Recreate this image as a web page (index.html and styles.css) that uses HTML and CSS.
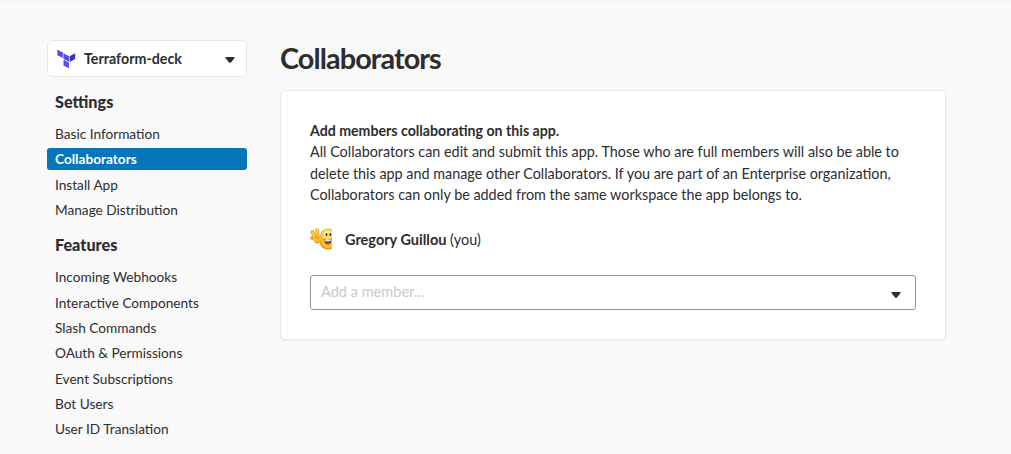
FILE: index.html
```html
<!DOCTYPE html>
<html lang="en">
<head>
<meta charset="utf-8">
<title>Collaborators</title>
<link rel="stylesheet" href="styles.css">
</head>
<body>
<div class="page">
  <aside class="sidebar">
    <div class="app-picker">
      <svg class="app-logo" width="20" height="20" viewBox="0 0 20 20">
        <path fill="#5550e6" d="M.3.6l5.600 2.800v5.700L.3 6.200zM6.500 4.300l5.600 2.900v5.600L6.500 10zM6.500 10.800l5.600 2.900v5.600l-5.600-2.800z"/>
        <path fill="#3834bb" d="M12.700 7.200l5.400-2.900v5.700l-5.400 2.900z"/>
      </svg>
      <span class="app-name">Terraform-deck</span>
      <svg class="caret" width="10" height="6" viewBox="0 0 10 6"><path fill="#2c2d30" d="M1 0h8q1 .3.5 1.100L6 5.400q-1 .8-2 0L.5 1.100Q0 .3 1 0z"/></svg>
    </div>
    <h2 class="nav-title">Settings</h2>
    <nav class="nav">
      <a class="nav-item">Basic Information</a>
      <a class="nav-item active">Collaborators</a>
      <a class="nav-item">Install App</a>
      <a class="nav-item">Manage Distribution</a>
    </nav>
    <h2 class="nav-title features">Features</h2>
    <nav class="nav">
      <a class="nav-item">Incoming Webhooks</a>
      <a class="nav-item">Interactive Components</a>
      <a class="nav-item">Slash Commands</a>
      <a class="nav-item">OAuth &amp; Permissions</a>
      <a class="nav-item">Event Subscriptions</a>
      <a class="nav-item">Bot Users</a>
      <a class="nav-item">User ID Translation</a>
    </nav>
  </aside>
  <main class="main">
    <h1 class="title">Collaborators</h1>
    <section class="card">
      <p class="intro"><strong>Add members collaborating on this app.</strong><br>
      All Collaborators can edit and submit this app. Those who are full members will also be able to<br>
      delete this app and manage other Collaborators. If you are part of an Enterprise organization,<br>
      Collaborators can only be added from the same workspace the app belongs to.</p>
      <div class="member">
        <svg class="avatar" width="22" height="22" viewBox="0 0 22 22">
          <path fill="#fbc22e" d="M11 4Q15-1 22 1v19q-5 3-9 0Q9 17.500 10 11z"/>
          <path fill="#ffdc50" d="M13 4q4-3 8-2v10q-6 1-9-3z"/>
          <path fill="none" stroke="#e9930f" stroke-width="1.300" d="M10.500 12q0 6 4 8 4 1.800 7.500 0"/>
          <path fill="none" stroke="#ee9f22" stroke-width="3.600" stroke-linecap="round" d="M5 9L2.200 4M7.500 8L7 2M4 10.500L2 10"/>
          <path fill="none" stroke="#ffcf49" stroke-width="2" stroke-linecap="round" d="M5 9L2.200 4M7.500 8L7 2"/>
          <ellipse cx="7.500" cy="10.500" rx="4.800" ry="4.600" fill="#f9b931"/>
          <path fill="none" stroke="#e59118" d="M5 9.500q3-1 4 1.500M5 14.500q3 1.500 6-1"/>
          <ellipse cx="16" cy="6" rx="1.800" ry="2.700" fill="#fff"/><ellipse cx="20.300" cy="6" rx="1.700" ry="2.700" fill="#fff"/>
          <ellipse cx="16.500" cy="6.500" rx="1" ry="1.500" fill="#33261c"/><ellipse cx="20.300" cy="6.500" rx="1" ry="1.500" fill="#33261c"/>
          <path fill="#70251b" d="M13.500 11q4 2.500 8-.5 0 6-3.500 6-3.500-.5-4.500-5.500z"/>
          <path fill="#fff" d="M14 11.400q3.800 2 7.200-.3v1.400q-3.500 2-6.600.4z"/><path fill="#e65043" d="M16.500 15q2-1.500 3.500 0-1.500 1.800-3.500 0z"/>
        </svg>
        <span><strong>Gregory Guillou</strong> (you)</span>
      </div>
      <div class="select">
        <span class="placeholder">Add a member…</span>
        <svg class="caret" width="10" height="6" viewBox="0 0 10 6"><path fill="#2c2d30" d="M1 0h8q1 .3.5 1.100L6 5.400q-1 .8-2 0L.5 1.100Q0 .3 1 0z"/></svg>
      </div>
    </section>
  </main>
</div>
</body>
</html>
```

FILE: styles.css
```css
* { box-sizing: border-box; }
body {
  margin: 0;
  height: 454px;
  overflow: hidden;
  background: #f9f9f9;
  box-shadow: inset 0 1px 0 #f3f3f3;
  color: #2c2d30;
  font-family: Lato, "Liberation Sans", sans-serif;
  font-size: 14.4px;
}
h1, h2, p { margin: 0; }
.page {
  display: grid;
  grid-template-columns: 200px 666px;
  column-gap: 33px;
  padding: 40px 0 0 47px;
}
.app-picker {
  display: flex;
  align-items: center;
  height: 37px;
  padding: 0 11px 0 9px;
  background: #fff;
  border: 1px solid #e8e8e8;
  border-radius: 5px;
}
.app-logo { margin-right: 7px; }
.app-name { flex: 1; font-size: 14.25px; font-weight: 700; }
.app-picker .caret { margin-top: 3px; }
.nav-title {
  margin-top: 14px;
  padding-left: 8px;
  font-size: 16.2px;
  font-weight: 900;
  line-height: 22px;
}
.nav-title.features { margin-top: 13px; }
.nav { display: grid; grid-auto-rows: 22px; row-gap: 3.3px; margin-top: 10px; }
.features + .nav { margin-top: 10.5px; }
.nav-item {
  padding-left: 8px;
  font-size: 13.65px;
  line-height: 22px;
  border-radius: 3px;
}
.nav-item.active { background: #0576b9; color: #fff; font-weight: 700; }
.title {
  height: 50px;
  font-size: 28.8px;
  font-weight: 700;
  line-height: 37px;
  letter-spacing: -0.9px;
}
.card {
  height: 250px;
  padding: 29px;
  background: #fff;
  border: 1px solid #e8e8e8;
  border-radius: 5px;
  box-shadow: 0 1px 2px rgba(0, 0, 0, .04);
}
.intro {
  height: 86px;
  font-size: 14.36px;
  line-height: 21.35px;
  white-space: nowrap;
}
.intro strong { font-size: 14.17px; }
.member { display: flex; align-items: center; gap: 13px; height: 22px; margin-top: 22px; }
.member strong { font-size: 14.5px; }
.select {
  display: flex;
  align-items: center;
  justify-content: space-between;
  height: 35px;
  margin-top: 25px;
  padding: 0 14px 0 10px;
  border: 1px solid #929497;
  border-radius: 3px;
}
.placeholder { color: #c9c9cb; font-size: 14.55px; padding-bottom: 2px; }
.select .caret { margin-top: 5px; }
```
